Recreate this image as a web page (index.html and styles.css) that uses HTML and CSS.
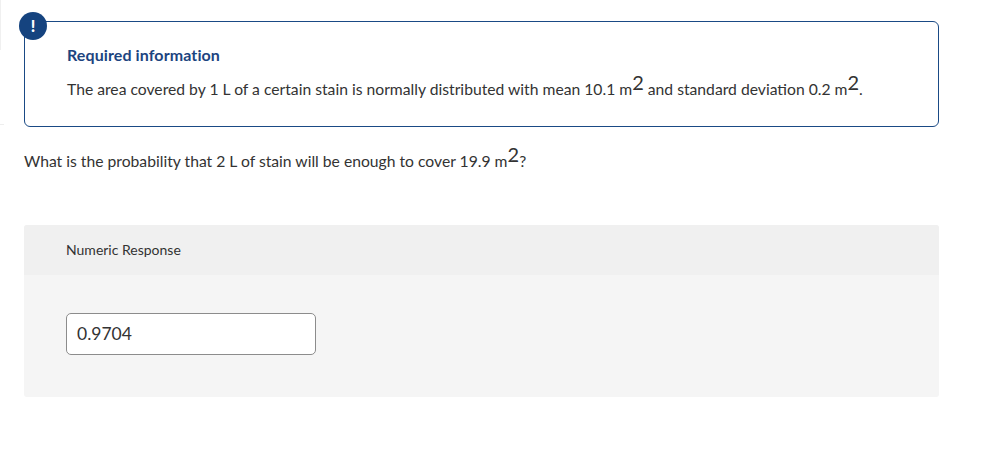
FILE: index.html
```html
<!DOCTYPE html>
<html lang="en">
<head>
  <meta charset="UTF-8">
  <title>Required information</title>
  <link rel="stylesheet" href="styles.css">
</head>
<body>

<div class="edge-strip"></div>
<div class="edge-tick"></div>

<div class="notice">
  <span class="notice-badge">!</span>
  <h4 class="notice-title">Required information</h4>
  <p class="notice-text">The area covered by 1 L of a certain stain is normally distributed with mean 10.1 m<sup>2</sup> and standard deviation 0.2 m<sup>2</sup>.</p>
</div>

<p class="question">What is the probability that 2 L of stain will be enough to cover 19.9 m<sup>2</sup>?</p>

<div class="response">
  <div class="response-head">Numeric Response</div>
  <div class="response-body">
    <input class="response-input" type="text" value="0.9704">
  </div>
</div>

</body>
</html>
```

FILE: styles.css
```css
body {
  margin: 0;
  padding: 21px 46px 0 24px;
  font-family: Lato, Arial, sans-serif;
  font-size: 15.7px;
  color: #333;
  background-color: #fff;
}
sup {
  font-size: 20px;
  line-height: 0;
  vertical-align: 5px;
}
.edge-strip {
  position: absolute;
  left: 0;
  top: 0;
  width: 1px;
  height: 50px;
  background-color: #f0f0f0;
}
.edge-tick {
  position: absolute;
  left: 0;
  top: 124px;
  width: 4px;
  height: 1px;
  background-color: #eee;
}
.notice {
  position: relative;
  height: 106px;
  box-sizing: border-box;
  padding: 23px 42px 0;
  border: 1px solid #1a4a85;
  border-radius: 6px;
}
.notice-badge {
  position: absolute;
  left: -6px;
  top: -10px;
  width: 28px;
  height: 28px;
  border-radius: 50%;
  background-color: #15437f;
  color: #fff;
  font-size: 16px;
  font-weight: 900;
  line-height: 28px;
  text-align: center;
}
.notice-title {
  margin: 0;
  font-size: 16px;
  line-height: 20px;
  font-weight: 700;
  letter-spacing: 0.1px;
  color: #1c4480;
}
.notice-text {
  margin: 14px 0 0;
  line-height: 20px;
}
.question {
  margin: 24px 0 0;
  line-height: 20px;
}
.response {
  margin-top: 54px;
  border-radius: 3px;
  overflow: hidden;
  background-color: #f5f5f5;
}
.response-head {
  height: 50px;
  padding-left: 42px;
  background-color: #f0f0f0;
  font-size: 14px;
  line-height: 50px;
}
.response-body {
  padding: 38px 42px 42px;
}
.response-input {
  display: block;
  width: 250px;
  height: 42px;
  box-sizing: border-box;
  padding: 0 10px 2px;
  border: 1px solid #8c8c8c;
  border-radius: 5px;
  font-family: Lato, Arial, sans-serif;
  font-size: 17.5px;
  color: #333;
  background-color: #fff;
}
```
